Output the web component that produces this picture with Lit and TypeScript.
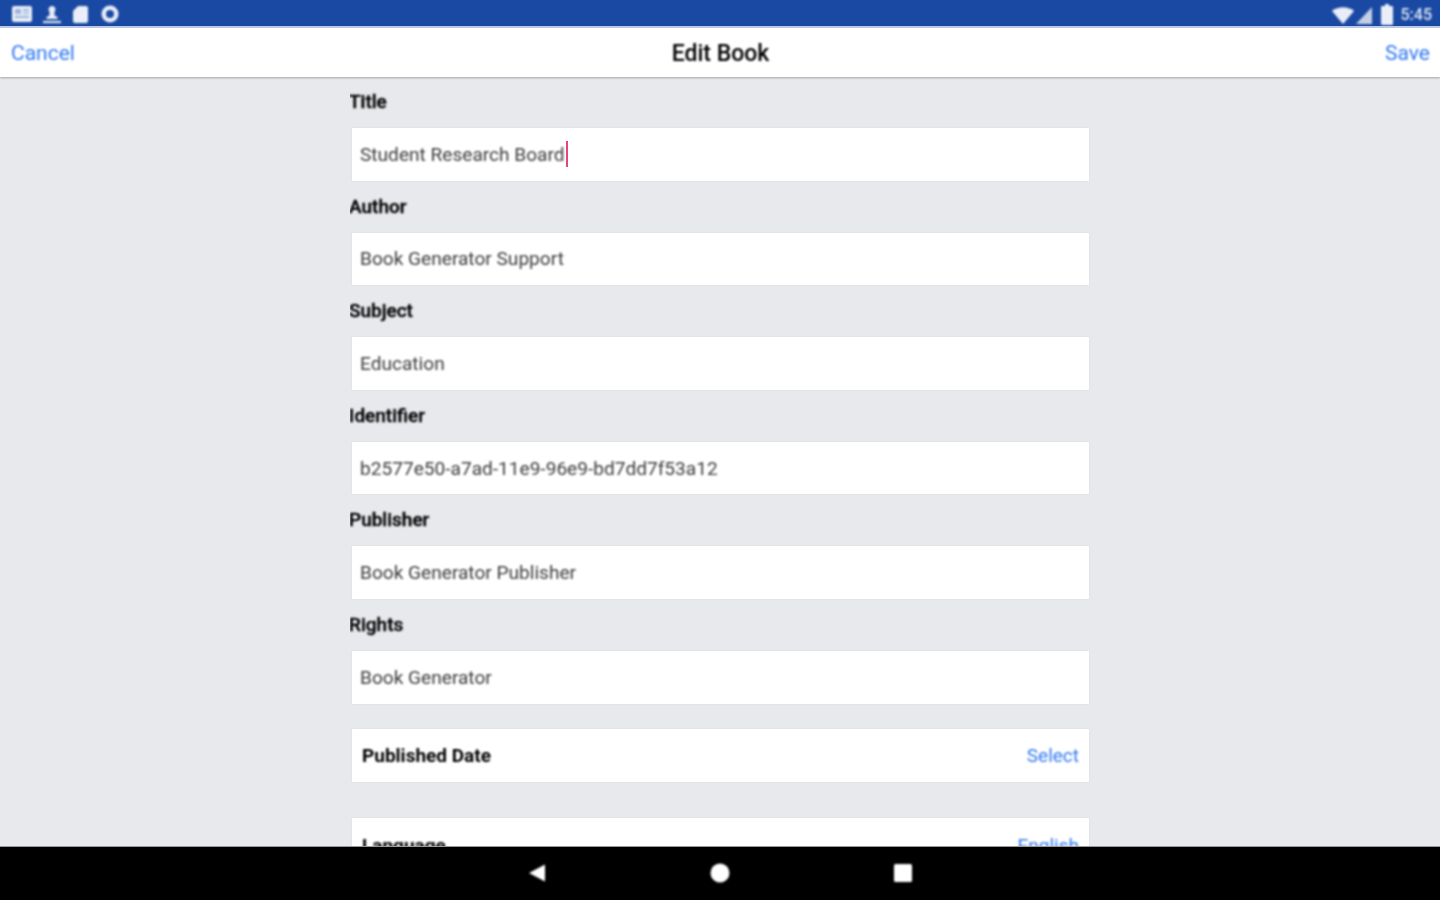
import { LitElement, html, css, svg } from "lit";
import { customElement } from "lit/decorators.js";

const fields: [string, string][] = [
  ["Title", "Student Research Board"],
  ["Author", "Book Generator Support"],
  ["Subject", "Education"],
  ["Identifier", "b2577e50-a7ad-11e9-96e9-bd7dd7f53a12"],
  ["Publisher", "Book Generator Publisher"],
  ["Rights", "Book Generator"],
];

@customElement("app-root")
export class AppRoot extends LitElement {
  static styles = css`
    :host { display: block; font-family: Roboto, "Liberation Sans", sans-serif; }
    .screen { height: 900px; display: flex; flex-direction: column; overflow: hidden; background: #e8e9ed; }
    .status { flex: 0 0 26px; box-sizing: border-box; padding: 2px 8px 0 11px; background: #1a49a3; display: flex; align-items: center; justify-content: space-between; }
    .status-group { display: flex; align-items: center; filter: blur(0.8px); }
    .left-icons { gap: 10px; }
    .time { color: #dfe7f4; font-size: 16px; font-weight: 500; margin-left: 8px; }
    .spacer { width: 8px; }
    .nav { flex: 0 0 51px; background: #fff; border-top: 2px solid #b9c8e4; box-sizing: border-box; box-shadow: 0 1px 2px rgba(0,0,0,.3); display: grid; grid-template-columns: 1fr auto 1fr; align-items: center; padding: 1px 10px 0 11px; position: relative; z-index: 1; }
    .nav-btn { color: #3279f0; font-size: 21px; filter: blur(0.8px); }
    .nav-btn.save { text-align: right; }
    .nav-title { color: #000; font-size: 23px; font-weight: 500; filter: blur(0.8px); }
    .main { flex: 1; min-height: 0; overflow: hidden; width: 740px; margin: 0 auto; }
    .label { height: 50px; box-sizing: border-box; padding-bottom: 1px; display: flex; align-items: center; font-size: 19px; font-weight: 500; -webkit-text-stroke: 0.4px #000; color: #000; margin-left: -1px; filter: blur(0.8px); }
    .input { height: 52.6px; margin: 1px 1px 1px 2px; box-sizing: border-box; background: #fff; box-shadow: 0 0 2px rgba(0,0,0,.07); display: flex; align-items: center; padding-left: 8px; font-size: 19.1px; color: #3c3c3c; }
    .input span { filter: blur(0.8px); }
    .caret { width: 2.500px; height: 26px; margin-left: 1px; background: #e8437f; }
    .card { height: 53px; margin: 0 1px 0 2px; box-sizing: border-box; background: #fff; box-shadow: 0 0 2px rgba(0,0,0,.07); display: flex; justify-content: space-between; align-items: center; padding: 0 10px; font-size: 19px; }
    .card.first { margin-top: 25.500px; }
    .card.second { margin-top: 36px; height: 54px; }
    .card-label { font-weight: 700; color: #000; filter: blur(0.8px); }
    .card-value { color: #3279f0; filter: blur(0.8px); }
    .bottom { flex: 0 0 54px; background: #000; border-top: 1px solid #999; display: flex; align-items: center; justify-content: center; gap: 163.500px; position: relative; z-index: 2; box-sizing: border-box; padding: 0 0 1px 1px; }
    .bottom svg { filter: blur(0.8px); }
    svg { display: block; }
  `;

  private icon(w: number, content: unknown) {
    return html`<svg width=${w} height="22" viewBox="0 0 ${w} 22" fill="#e9eef8">${content}</svg>`;
  }

  render() {
    return html`
      <div class="screen">
        <div class="status">
          <div class="status-group left-icons">
            ${this.icon(21, svg`<rect x="1" y="3" width="20" height="16" rx="2"/><path fill="#9fb4da" d="M4 6h6v5H4zM12 6h6v2h-6zM12 9.500h6v1.500h-6zM4 13h14v2H4z"/>`)}
            ${this.icon(20, svg`<path d="M10 3a3.500 3.500 0 0 1 2.500 6v3.500l3 1.500v2H4.500v-2l3-1.500V9A3.500 3.500 0 0 1 10 3zM1 18h18v2H1z"/>`)}
            ${this.icon(16, svg`<path d="M6 3h8a2 2 0 0 1 2 2v13a2 2 0 0 1-2 2H3a2 2 0 0 1-2-2V8z"/>`)}
            ${this.icon(24, svg`<path fill-rule="evenodd" d="M12 2.500a8.500 8.500 0 1 1 0 17 8.500 8.500 0 0 1 0-17zm0 4.500a4 4 0 1 0 0 8 4 4 0 0 0 0-8z"/>`)}
          </div>
          <div class="status-group">
            ${this.icon(23, svg`<path d="M0 8C6 3 16 3 22 8L11 21z"/>`)}
            ${this.icon(18, svg`<path d="M17 4v17H1z" fill="#c4cfe4"/>`)}
            <div class="spacer"></div>
            ${this.icon(12, svg`<path d="M4 1h4v2h3a1 1 0 0 1 1 1v17a1 1 0 0 1-1 1H1a1 1 0 0 1-1-1V4a1 1 0 0 1 1-1h3z"/>`)}
            <span class="time">5:45</span>
          </div>
        </div>
        <div class="nav">
          <div class="nav-btn">Cancel</div>
          <div class="nav-title">Edit Book</div>
          <div class="nav-btn save">Save</div>
        </div>
        <div class="main">
          ${fields.map(([label, value], i) => html`
            <div class="label">${label}</div>
            <div class="input"><span>${value}</span>${i === 0 ? html`<div class="caret"></div>` : ""}</div>
          `)}
          <div class="card first"><span class="card-label">Published Date</span><span class="card-value">Select</span></div>
          <div class="card second"><span class="card-label">Language</span><span class="card-value">English</span></div>
        </div>
        <div class="bottom">
          <svg width="18" height="20" viewBox="0 0 18 20" fill="#fff"><path d="M1 10 17 1.500v17z"/></svg>
          <svg width="20" height="20" viewBox="0 0 20 20" fill="#fff"><circle cx="10" cy="10" r="9.500"/></svg>
          <svg width="20" height="20" viewBox="0 0 20 20" fill="#fff"><rect x="1" y="1" width="18" height="18" rx="1.500"/></svg>
        </div>
      </div>
    `;
  }
}
